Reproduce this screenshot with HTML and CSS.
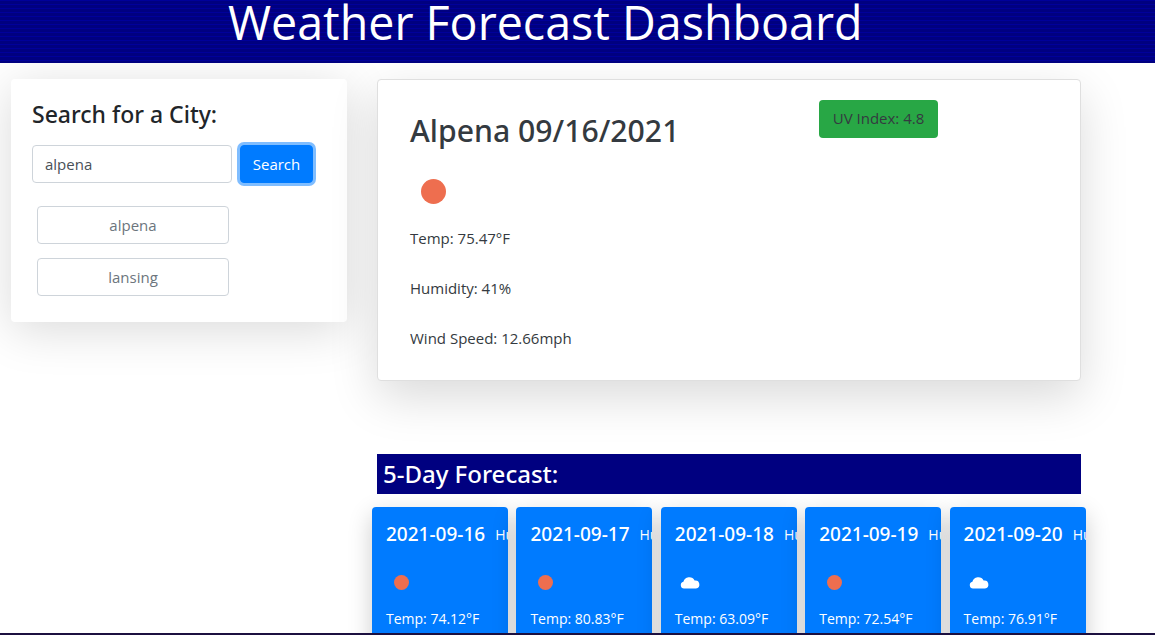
FILE: index.html
```html
<!DOCTYPE html>
<html>
<head>
    <title>Weather Forecast Dashboard</title>
    <link rel="stylesheet" href="styles.css">
</head>
<body>
    <div class="page">
        <header class="top-bar">
            <h1>Weather Forecast Dashboard</h1>
        </header>
        <main class="content">
            <section class="search-card">
                <h2>Search for a City:</h2>
                <form class="search-form">
                    <input class="city-input" type="text" value="alpena">
                    <button class="search-btn" type="button">Search</button>
                </form>
                <button class="history-btn" type="button">alpena</button>
                <button class="history-btn" type="button">lansing</button>
            </section>
            <section class="results">
                <div class="current-card">
                    <div class="current-head">
                        <h2>Alpena 09/16/2021</h2>
                        <span class="uv-badge">UV Index: 4.8</span>
                    </div>
                    <svg class="current-icon" viewBox="0 0 24 24"><circle cx="12" cy="12" r="12"/></svg>
                    <p>Temp: 75.47°F</p>
                    <p>Humidity: 41%</p>
                    <p>Wind Speed: 12.66mph</p>
                </div>
                <h3 class="forecast-title">5-Day Forecast:</h3>
                <div class="forecast-row">
                    <article class="day-card">
                        <div class="day-head"><h4>2021-09-16</h4><span>Humidity: 41%</span></div>
                        <svg class="sun" viewBox="0 0 16 16"><circle cx="8" cy="8" r="8"/></svg>
                        <p>Temp: 74.12°F</p>
                    </article>
                    <article class="day-card">
                        <div class="day-head"><h4>2021-09-17</h4><span>Humidity: 41%</span></div>
                        <svg class="sun" viewBox="0 0 16 16"><circle cx="8" cy="8" r="8"/></svg>
                        <p>Temp: 80.83°F</p>
                    </article>
                    <article class="day-card">
                        <div class="day-head"><h4>2021-09-18</h4><span>Humidity: 52%</span></div>
                        <svg class="cloud" viewBox="0 0 20 14"><path d="M4 13a3.4 3.4 0 0 1-.6-6.7A6 6 0 0 1 14.6 5a4 4 0 0 1 1.4 8z"/></svg>
                        <p>Temp: 63.09°F</p>
                    </article>
                    <article class="day-card">
                        <div class="day-head"><h4>2021-09-19</h4><span>Humidity: 48%</span></div>
                        <svg class="sun" viewBox="0 0 16 16"><circle cx="8" cy="8" r="8"/></svg>
                        <p>Temp: 72.54°F</p>
                    </article>
                    <article class="day-card">
                        <div class="day-head"><h4>2021-09-20</h4><span>Humidity: 45%</span></div>
                        <svg class="cloud" viewBox="0 0 20 14"><path d="M4 13a3.4 3.4 0 0 1-.6-6.7A6 6 0 0 1 14.6 5a4 4 0 0 1 1.4 8z"/></svg>
                        <p>Temp: 76.91°F</p>
                    </article>
                </div>
            </section>
        </main>
        <div class="bottom-line"></div>
    </div>
</body>
</html>
```

FILE: styles.css
```css
html, body {
    margin: 0;
    height: 100%;
    overflow: hidden;
}
body {
    font-family: "Open Sans", "Noto Sans", sans-serif;
    font-size: 15px;
    color: #343a40;
    background-color: #fff;
}
h1, h2, h3, h4, p {
    margin: 0;
    font-weight: 400;
}
h2, h3, h4 {
    font-family: "Noto Sans", "Open Sans", sans-serif;
    font-weight: 500;
}
.page {
    height: 635px;
    display: flex;
    flex-direction: column;
}
.top-bar {
    height: 63px;
    flex: none;
    background-color: #000080;
    background-image: repeating-linear-gradient(to bottom, #00009a 0, #00009a 1px, #000080 1px, #000080 4px);
    padding-left: 228px;
    overflow: hidden;
}
.top-bar h1 {
    color: #fff;
    font-size: 46.6px;
    line-height: 44px;
    white-space: nowrap;
}
.content {
    flex: 1;
    min-height: 0;
    overflow: hidden;
    display: flex;
    align-items: flex-start;
    padding: 16px 0 0 11px;
    gap: 30px;
}
.search-card {
    width: 336px;
    height: 243px;
    box-sizing: border-box;
    padding: 19px 21px;
    background-color: #fff;
    border-radius: 4px;
    box-shadow: 0 8px 48px rgba(0, 0, 0, 0.15);
}
.search-card h2 {
    font-size: 23px;
    line-height: 32px;
    color: #212529;
}
.search-form {
    display: flex;
    gap: 8px;
    margin-top: 15px;
    margin-bottom: 23px;
}
.city-input {
    width: 200px;
    height: 38px;
    box-sizing: border-box;
    padding: 0 12px;
    border: 1px solid #ced4da;
    border-radius: 4px;
    font: inherit;
    color: #495057;
}
.search-btn {
    width: 73px;
    height: 38px;
    padding: 0;
    border: 1px solid #007bff;
    border-radius: 4px;
    background-color: #007bff;
    color: #fff;
    font: inherit;
    box-shadow: 0 0 0 3px rgba(0, 123, 255, 0.5);
}
.history-btn {
    display: block;
    width: 192px;
    height: 38px;
    margin: 0 0 14px 5px;
    background-color: #fff;
    border: 1px solid #ced4da;
    border-radius: 4px;
    color: #6c757d;
    font: inherit;
}
.results {
    width: 704px;
}
.current-card {
    height: 302px;
    box-sizing: border-box;
    padding: 32px;
    border: 1px solid #dfdfdf;
    border-radius: 4px;
    background-color: #fff;
    box-shadow: 0 16px 48px rgba(0, 0, 0, 0.15);
}
.current-head {
    display: flex;
    align-items: flex-start;
    height: 64px;
}
.current-head h2 {
    font-size: 30.2px;
    line-height: 38px;
    color: #343a40;
    width: 409px;
    flex: none;
}
.uv-badge {
    margin-top: -12px;
    width: 119px;
    height: 38px;
    line-height: 36px;
    text-align: center;
    background-color: #28a745;
    border-radius: 4px;
    white-space: nowrap;
}
.current-icon {
    display: block;
    width: 25px;
    height: 25px;
    margin: 3px 0 0 11px;
    fill: #ee6e4f;
}
.current-card p {
    line-height: 24px;
    margin-top: 26px;
}
.current-card .current-icon + p {
    margin-top: 22px;
}
.forecast-title {
    margin-top: 73px;
    height: 40px;
    line-height: 40px;
    padding-left: 6px;
    background-color: #000080;
    color: #fff;
    font-size: 24px;
}
.forecast-row {
    display: flex;
    gap: 8.4px;
    margin: 13px -5px 0 -5px;
}
.day-card {
    width: 136px;
    height: 180px;
    flex: none;
    box-sizing: border-box;
    padding: 14px;
    overflow: hidden;
    border-radius: 4px;
    background-color: #007bff;
    color: #fff;
    font-size: 14px;
    box-shadow: 0 8px 24px rgba(0, 0, 0, 0.2);
}
.day-head {
    display: flex;
    align-items: center;
    gap: 10px;
    white-space: nowrap;
    height: 26px;
}
.day-head h4 {
    font-size: 19px;
}
.sun {
    display: block;
    width: 15px;
    height: 15px;
    margin: 28px 0 0 8px;
    fill: #ee6e4f;
}
.cloud {
    display: block;
    width: 20px;
    height: 15px;
    margin: 28px 0 0 5px;
    fill: #fff;
}
.day-card p {
    margin-top: 19px;
    line-height: 20px;
}
.bottom-line {
    height: 2px;
    flex: none;
    background-color: #1c1040;
}
```
